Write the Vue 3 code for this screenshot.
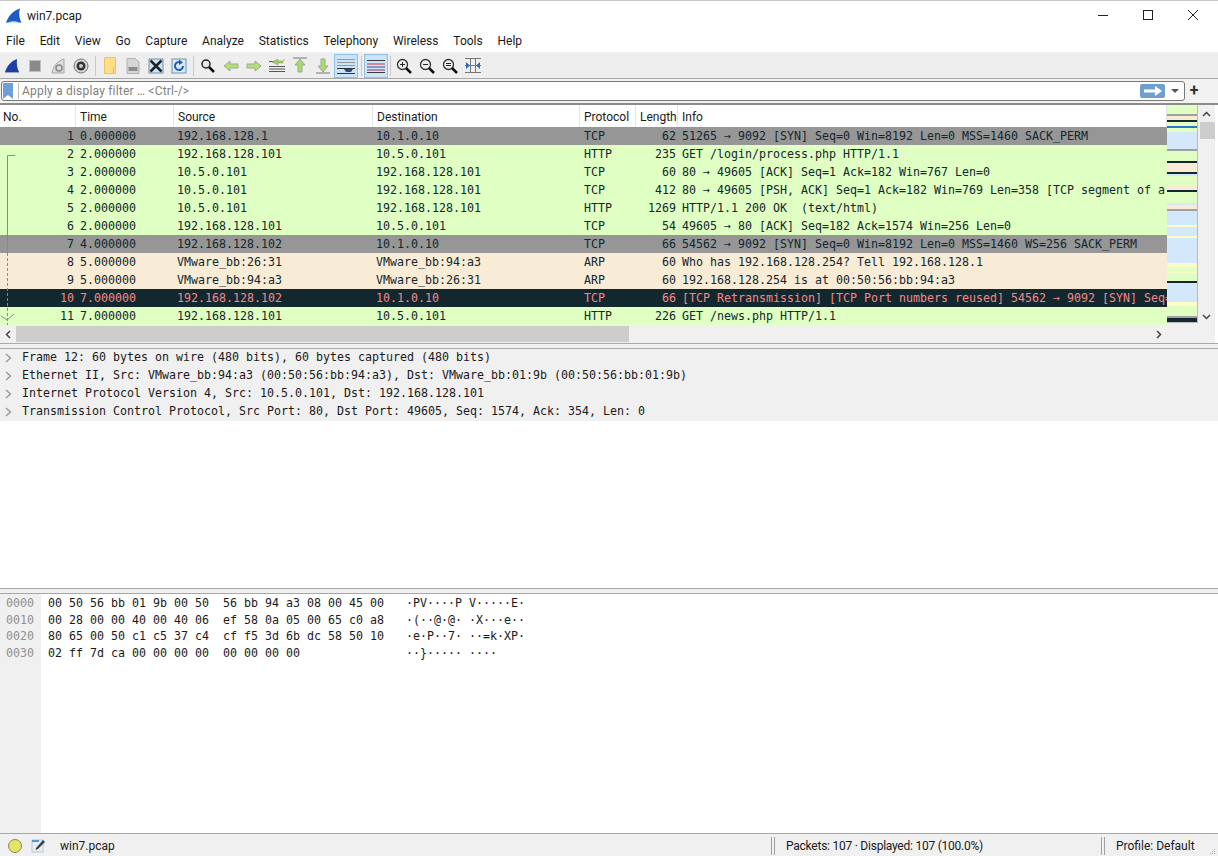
<script setup>
const menus = ['File', 'Edit', 'View', 'Go', 'Capture', 'Analyze', 'Statistics', 'Telephony', 'Wireless', 'Tools', 'Help']

const columns = [
  { key: 'no', label: 'No.' },
  { key: 'time', label: 'Time' },
  { key: 'src', label: 'Source' },
  { key: 'dst', label: 'Destination' },
  { key: 'proto', label: 'Protocol' },
  { key: 'len', label: 'Length' },
  { key: 'info', label: 'Info' },
]

const packets = [
  { no: 1, time: '0.000000', src: '192.168.128.1', dst: '10.1.0.10', proto: 'TCP', len: 62, info: '51265 → 9092 [SYN] Seq=0 Win=8192 Len=0 MSS=1460 SACK_PERM', kind: 'gray' },
  { no: 2, time: '2.000000', src: '192.168.128.101', dst: '10.5.0.101', proto: 'HTTP', len: 235, info: 'GET /login/process.php HTTP/1.1', kind: 'green' },
  { no: 3, time: '2.000000', src: '10.5.0.101', dst: '192.168.128.101', proto: 'TCP', len: 60, info: '80 → 49605 [ACK] Seq=1 Ack=182 Win=767 Len=0', kind: 'green' },
  { no: 4, time: '2.000000', src: '10.5.0.101', dst: '192.168.128.101', proto: 'TCP', len: 412, info: '80 → 49605 [PSH, ACK] Seq=1 Ack=182 Win=769 Len=358 [TCP segment of a', kind: 'green' },
  { no: 5, time: '2.000000', src: '10.5.0.101', dst: '192.168.128.101', proto: 'HTTP', len: 1269, info: 'HTTP/1.1 200 OK  (text/html)', kind: 'green' },
  { no: 6, time: '2.000000', src: '192.168.128.101', dst: '10.5.0.101', proto: 'TCP', len: 54, info: '49605 → 80 [ACK] Seq=182 Ack=1574 Win=256 Len=0', kind: 'green' },
  { no: 7, time: '4.000000', src: '192.168.128.102', dst: '10.1.0.10', proto: 'TCP', len: 66, info: '54562 → 9092 [SYN] Seq=0 Win=8192 Len=0 MSS=1460 WS=256 SACK_PERM', kind: 'gray' },
  { no: 8, time: '5.000000', src: 'VMware_bb:26:31', dst: 'VMware_bb:94:a3', proto: 'ARP', len: 60, info: 'Who has 192.168.128.254? Tell 192.168.128.1', kind: 'tan' },
  { no: 9, time: '5.000000', src: 'VMware_bb:94:a3', dst: 'VMware_bb:26:31', proto: 'ARP', len: 60, info: '192.168.128.254 is at 00:50:56:bb:94:a3', kind: 'tan' },
  { no: 10, time: '7.000000', src: '192.168.128.102', dst: '10.1.0.10', proto: 'TCP', len: 66, info: '[TCP Retransmission] [TCP Port numbers reused] 54562 → 9092 [SYN] Seq=', kind: 'dark' },
  { no: 11, time: '7.000000', src: '192.168.128.101', dst: '10.5.0.101', proto: 'HTTP', len: 226, info: 'GET /news.php HTTP/1.1', kind: 'green' },
]

const details = [
  'Frame 12: 60 bytes on wire (480 bits), 60 bytes captured (480 bits)',
  'Ethernet II, Src: VMware_bb:94:a3 (00:50:56:bb:94:a3), Dst: VMware_bb:01:9b (00:50:56:bb:01:9b)',
  'Internet Protocol Version 4, Src: 10.5.0.101, Dst: 192.168.128.101',
  'Transmission Control Protocol, Src Port: 80, Dst Port: 49605, Seq: 1574, Ack: 354, Len: 0',
]

const hexRows = [
  { off: '0000', hex: '00 50 56 bb 01 9b 00 50  56 bb 94 a3 08 00 45 00', ascii: '·PV····P V·····E·' },
  { off: '0010', hex: '00 28 00 00 40 00 40 06  ef 58 0a 05 00 65 c0 a8', ascii: '·(··@·@· ·X···e··' },
  { off: '0020', hex: '80 65 00 50 c1 c5 37 c4  cf f5 3d 6b dc 58 50 10', ascii: '·e·P··7· ··=k·XP·' },
  { off: '0030', hex: '02 ff 7d ca 00 00 00 00  00 00 00 00', ascii: '··}····· ····' },
]

// minimap stripes: [height, colour]
const g = '#dfffc3'
const b = '#d3e8fb'
const t = '#f8ecd6'
const k = '#12272e'
const a = '#a0a0a0'
const y = '#fcfcc8'
const stripes = [
  [9, g], [2, a], [4, t], [2, k], [4, g], [2, '#2f74c8'], [4, g], [17, b], [2, a], [10, g], [2, k], [9, t], [2, k], [2, b],
  [10, g], [4, t], [2, k], [11, g], [2, b], [4, t], [2, a], [14, b], [2, y], [9, b], [2, y], [25, b], [4, y],
  [4, g], [2, y], [8, g], [2, k], [19, b], [4, y], [10, g], [2, a], [4, k],
]
</script>

<template>
  <div class="win">
    <div class="titlebar">
      <svg class="shark" width="16" height="16" viewBox="0 0 16 16">
        <path d="M0 15C2 8 7 3 14 0.500C12.500 5 13 10 15.500 15C10 13 5 13 0 15Z" fill="#1c5cc4" />
        <path d="M0 15C5 12.500 10 12.500 15.500 15C10 14 5 14 0 15Z" fill="#8ab8ea" />
      </svg>
      <span class="wintitle">win7.pcap</span>
      <div class="winbtns">
        <svg width="12" height="12" viewBox="0 0 12 12"><path d="M1 6.500H11" stroke="#222" /></svg>
        <svg width="12" height="12" viewBox="0 0 12 12"><rect x="1.500" y="1.500" width="9" height="9" fill="none" stroke="#222" /></svg>
        <svg width="12" height="12" viewBox="0 0 12 12"><path d="M1 1L11 11M11 1L1 11" stroke="#222" /></svg>
      </div>
    </div>

    <div class="menubar">
      <span v-for="m in menus" :key="m">{{ m }}</span>
    </div>

    <div class="toolbar">
      <button class="tool">
        <svg width="16" height="15" viewBox="0 0 16 15"><path d="M1 14C3 8 7 3 13 1C12.500 6 13 10 15 14Z" fill="#1f3fa8" /><path d="M1 14.500H15" stroke="#9aa8c0" /></svg>
      </button>
      <button class="tool">
        <svg width="14" height="14" viewBox="0 0 14 14"><rect x="1.500" y="1.500" width="11" height="11" fill="#8a8a8a" stroke="#c0c0c0" /></svg>
      </button>
      <button class="tool">
        <svg width="16" height="16" viewBox="0 0 16 16"><path d="M2 15C3 9 7 3 14 1V15Z" fill="#dcdcdc" stroke="#a8a8a8" /><circle cx="9" cy="10" r="3" fill="none" stroke="#8a8a8a" stroke-width="1.500" /></svg>
      </button>
      <button class="tool">
        <svg width="16" height="16" viewBox="0 0 16 16"><circle cx="8" cy="8" r="7" fill="#d8d8d8" stroke="#777" /><circle cx="8" cy="8" r="4.500" fill="#333" /><circle cx="8" cy="8" r="2" fill="#ccc" /></svg>
      </button>
      <i class="sep"></i>
      <button class="tool">
        <svg width="14" height="17" viewBox="0 0 14 17"><path d="M1.500 .500H12.500V16.500H1.500Z" fill="#ffdf85" stroke="#e8c468" /><path d="M10.500 16V10" stroke="#e0b858" /></svg>
      </button>
      <button class="tool">
        <svg width="14" height="16" viewBox="0 0 14 16"><path d="M1 .500H9L13 4V15.500H1Z" fill="#d6d6d6" stroke="#b0b0b0" /><rect x="2.500" y="9" width="9" height="4" fill="#8c8c8c" /></svg>
      </button>
      <button class="tool">
        <svg width="16" height="16" viewBox="0 0 16 16"><rect x="1" y="1" width="14" height="14" fill="#cfe3f5" stroke="#6f8fb0" /><path d="M2.500 2.500L13.500 13.500M13.500 2.500L2.500 13.500" stroke="#222" stroke-width="2.500" /></svg>
      </button>
      <button class="tool">
        <svg width="16" height="16" viewBox="0 0 16 16"><rect x="1" y="1" width="14" height="14" fill="#dbe9f7" stroke="#6f8fb0" /><path d="M12 8A4 4 0 1 1 9.500 4.300" fill="none" stroke="#1d5fb0" stroke-width="2" /><path d="M8 1.500L12 4.500L8 7Z" fill="#1d5fb0" /></svg>
      </button>
      <i class="sep"></i>
      <button class="tool">
        <svg width="16" height="16" viewBox="0 0 16 16"><circle cx="6" cy="6" r="4" fill="#e8e8e8" stroke="#222" stroke-width="1.500" /><path d="M9 9L14 14" stroke="#111" stroke-width="2.500" /></svg>
      </button>
      <button class="tool">
        <svg width="16" height="12" viewBox="0 0 16 12"><path d="M1 6L7 1V4H15V8H7V11Z" fill="#b4e36c" stroke="#9aa89a" /></svg>
      </button>
      <button class="tool">
        <svg width="16" height="12" viewBox="0 0 16 12"><path d="M15 6L9 1V4H1V8H9V11Z" fill="#b4e36c" stroke="#9aa89a" /></svg>
      </button>
      <button class="tool">
        <svg width="16" height="15" viewBox="0 0 16 15"><path d="M0 3.500H5M0 8.500H16M0 11H16M0 13.500H16" stroke="#555" /><path d="M3 4L9 1V3H14V5H9V7Z" fill="#9bd454" stroke="#888" stroke-width=".5" /><path d="M14 1H16V3H14Z" fill="#ecd24a" /></svg>
      </button>
      <button class="tool">
        <svg width="14" height="17" viewBox="0 0 14 17"><path d="M0 1H14" stroke="#777" /><path d="M7 2L12 8H9V15H5V8H2Z" fill="#a8dc68" stroke="#9aa89a" /></svg>
      </button>
      <button class="tool">
        <svg width="14" height="17" viewBox="0 0 14 17"><path d="M0 16H14" stroke="#777" /><path d="M7 15L12 9H9V2H5V9H2Z" fill="#a8dc68" stroke="#9aa89a" /></svg>
      </button>
      <button class="tool on">
        <svg width="18" height="16" viewBox="0 0 18 16"><path d="M0 1.500H18M0 4.500H18M0 7.500H18" stroke="#9a9a9a" /><path d="M0 10.500H18M0 15.500H18" stroke="#333" /><path d="M7 11H16L14 14H9Z" fill="#1f4f8c" /></svg>
      </button>
      <i class="sep"></i>
      <button class="tool on">
        <svg width="18" height="14" viewBox="0 0 18 14"><path d="M0 1.500H18" stroke="#3a3a3a" /><path d="M0 5H18" stroke="#e03030" /><path d="M0 8H18" stroke="#3050a0" /><path d="M0 11H18" stroke="#a03060" /><path d="M0 13.500H18" stroke="#3a3a3a" /></svg>
      </button>
      <i class="sep tight"></i>
      <button class="tool">
        <svg width="16" height="16" viewBox="0 0 16 16"><circle cx="6.500" cy="6.500" r="5" fill="#eee" stroke="#333" stroke-width="1.300" /><path d="M4 6.500H9M6.500 4V9" stroke="#222" /><path d="M10 10L15 15" stroke="#111" stroke-width="2.500" /></svg>
      </button>
      <button class="tool">
        <svg width="16" height="16" viewBox="0 0 16 16"><circle cx="6.500" cy="6.500" r="5" fill="#eee" stroke="#333" stroke-width="1.300" /><path d="M4 6.500H9" stroke="#222" /><path d="M10 10L15 15" stroke="#111" stroke-width="2.500" /></svg>
      </button>
      <button class="tool">
        <svg width="16" height="16" viewBox="0 0 16 16"><circle cx="6.500" cy="6.500" r="5" fill="#eee" stroke="#333" stroke-width="1.300" /><path d="M4 5.500H9M4 7.500H9" stroke="#222" /><path d="M10 10L15 15" stroke="#111" stroke-width="2.500" /></svg>
      </button>
      <button class="tool">
        <svg width="16" height="15" viewBox="0 0 16 15"><path d="M0 .500H16M0 14.500H16M5.500 0V15M10.500 0V15M0 7.500H16" stroke="#777" /><path d="M1 4L5 7.500L1 11ZM15 4L11 7.500L15 11Z" fill="#2f6fb8" /></svg>
      </button>
    </div>

    <div class="filterwrap">
      <div class="filter">
        <svg class="bookmark" width="10" height="16" viewBox="0 0 10 16"><path d="M0 0H10V16L5 12L0 16Z" fill="#6f9fd8" /></svg>
        <span class="placeholder">Apply a display filter … &lt;Ctrl-/&gt;</span>
        <span class="apply">
          <svg width="20" height="10" viewBox="0 0 20 10"><path d="M1 3.500H12V0L19 5L12 10V6.500H1Z" fill="#fff" /></svg>
        </span>
        <svg width="8" height="4" viewBox="0 0 8 4"><path d="M0 0H8L4 4Z" fill="#555" /></svg>
      </div>
      <span class="plus">+</span>
    </div>

    <div class="packets">
      <div class="packetmain">
        <div class="packetlist">
          <div class="row head">
            <div v-for="c in columns" :key="c.key" class="hcell" :class="c.key">{{ c.label }}</div>
          </div>
          <div v-for="p in packets" :key="p.no" class="row data" :class="p.kind">
            <div v-for="c in columns" :key="c.key" class="cell" :class="c.key">{{ p[c.key] }}</div>
          </div>
          <svg class="related" width="28" height="220" viewBox="0 0 28 220">
            <path d="M15 50.500H7.500V148" fill="none" stroke="#8a8a8a" />
            <path d="M7.500 148V220" fill="none" stroke="#8a8a8a" stroke-dasharray="3 2" />
            <path d="M1 211L7 215L14 209" fill="none" stroke="#8a8a8a" />
          </svg>
        </div>
        <div class="minimap">
          <i v-for="(s, i) in stripes" :key="i" :style="{ height: s[0] + 'px', background: s[1] }"></i>
        </div>
        <div class="vscroll">
          <span class="arrow">
            <svg width="9" height="6" viewBox="0 0 9 6"><path d="M1 5L4.500 1.500L8 5" fill="none" stroke="#444" stroke-width="1.500" /></svg>
          </span>
          <div class="vtrack"><i class="vthumb"></i></div>
          <span class="arrow">
            <svg width="9" height="6" viewBox="0 0 9 6"><path d="M1 1L4.500 4.500L8 1" fill="none" stroke="#444" stroke-width="1.500" /></svg>
          </span>
        </div>
      </div>
      <div class="hscroll">
        <span class="harrow">
          <svg width="6" height="9" viewBox="0 0 6 9"><path d="M5 1L1.500 4.500L5 8" fill="none" stroke="#444" stroke-width="1.500" /></svg>
        </span>
        <div class="htrack"><i class="hthumb"></i></div>
        <span class="harrow">
          <svg width="6" height="9" viewBox="0 0 6 9"><path d="M1 1L4.500 4.500L1 8" fill="none" stroke="#444" stroke-width="1.500" /></svg>
        </span>
      </div>
    </div>

    <div class="splitter"></div>

    <div class="details">
      <div v-for="d in details" :key="d" class="detail">
        <svg width="7" height="10" viewBox="0 0 7 10"><path d="M1 1L5.500 5L1 9" fill="none" stroke="#999" stroke-width="1.400" /></svg>
        <span>{{ d }}</span>
      </div>
    </div>

    <div class="splitter"></div>

    <div class="hexpane">
      <div class="offsets">
        <div v-for="h in hexRows" :key="h.off">{{ h.off }}</div>
      </div>
      <div class="hexes">
        <div v-for="h in hexRows" :key="h.off" class="hexrow">
          <span class="hex">{{ h.hex }}</span>
          <span>{{ h.ascii }}</span>
        </div>
      </div>
    </div>

    <div class="status">
      <span class="led"></span>
      <svg class="note" width="15" height="15" viewBox="0 0 15 15"><rect x="1" y="2" width="11" height="12" fill="#e8eef4" stroke="#b8c4d0" /><path d="M5 10L12 2L14 4L7 11L4.500 12Z" fill="#38424e" /><path d="M1 2H8V4H1Z" fill="#4a9ad8" /></svg>
      <span class="file">win7.pcap</span>
      <i class="grip"></i>
      <span class="counts">Packets: 107 · Displayed: 107 (100.0%)</span>
      <i class="grip"></i>
      <span class="profile">Profile: Default</span>
      <svg class="resize" width="7" height="7" viewBox="0 0 7 7"><path d="M5 1H6V2H5ZM3 3H4V4H3ZM5 3H6V4H5ZM1 5H2V6H1ZM3 5H4V6H3ZM5 5H6V6H5Z" fill="#aaa" /></svg>
    </div>
  </div>
</template>

<style scoped>
.win {
  width: 1218px;
  height: 856px;
  display: flex;
  flex-direction: column;
  overflow: hidden;
  background: #fff;
  font-family: Roboto, "Open Sans", sans-serif;
  font-size: 12px;
  color: #1a1a1a;
}

.titlebar {
  height: 29px;
  flex: none;
  border-top: 1px solid #c8c8c8;
  display: flex;
  align-items: center;
  padding: 0 19px 0 6px;
}
.shark {
  margin-right: 5px;
}
.wintitle {
  flex: 1;
}
.winbtns {
  display: flex;
  gap: 33px;
  margin-top: -2px;
}
.winbtns svg {
  display: block;
}

.menubar {
  height: 22px;
  flex: none;
  display: flex;
  align-items: center;
  padding-left: 6px;
  gap: 14.800px;
  border-bottom: 1px solid #f2f2f2;
}

.toolbar {
  height: 26px;
  flex: none;
  display: flex;
  align-items: center;
  background: #eeeeee;
  border-bottom: 1px solid #a8a8a8;
  box-sizing: border-box;
}
.tool {
  width: 23px;
  height: 24px;
  border: 0;
  padding: 0;
  background: none;
  display: flex;
  align-items: center;
  justify-content: center;
  flex: none;
}
.tool.on {
  width: 24px;
  background: #cce4f7;
  border: 1px solid #8fc0e8;
  box-sizing: border-box;
}
.sep {
  width: 1px;
  height: 20px;
  background: #c8c8c8;
  margin: 0 2.500px;
  flex: none;
}
.sep.tight {
  margin: 0 1.500px 0 2px;
}

.filterwrap {
  height: 26px;
  flex: none;
  display: flex;
  align-items: center;
  background: #f2f2f2;
  padding: 1px 15px 1px 1px;
  box-sizing: border-box;
  border-bottom: 2px solid #8c8c8c;
}
.filter {
  flex: 1;
  height: 20px;
  box-sizing: border-box;
  background: #fff;
  border: 1px solid #777;
  border-radius: 3px;
  display: flex;
  align-items: center;
  padding: 0 5px 0 1px;
}
.bookmark {
  margin-right: 3px;
  padding-right: 5px;
  border-right: 1px solid #bbb;
}
.placeholder {
  flex: 1;
  color: #808080;
  letter-spacing: 0.200px;
}
.apply {
  width: 25px;
  height: 14px;
  border-radius: 2px;
  background: #6f9fd0;
  display: flex;
  align-items: center;
  justify-content: center;
  margin-right: 6px;
}
.plus {
  width: 18px;
  text-align: center;
  font-size: 16px;
  font-weight: 700;
  line-height: 20px;
  color: #333;
}

.packets {
  flex: none;
  height: 238px;
  width: 1215px;
  display: flex;
  flex-direction: column;
}
.packetmain {
  height: 220px;
  display: flex;
  align-items: flex-start;
  background: #f0f0f0;
}
.packetlist {
  position: relative;
  width: 1167px;
  height: 220px;
  overflow: hidden;
  flex: none;
}
.row {
  display: grid;
  grid-template-columns: 76px 98px 199px 207px 56px 42px 489px;
}
.head {
  height: 22px;
  background: #fff;
}
.hcell {
  padding: 5px 0 0 4px;
  box-sizing: border-box;
  border-right: 1px solid #e4e4e4;
  white-space: nowrap;
  overflow: hidden;
}
.hcell.no {
  padding-left: 3px;
}
.data {
  height: 18px;
  font-family: "DejaVu Sans Mono", "Liberation Mono", monospace;
  font-size: 11.630px;
  line-height: 18px;
}
.cell {
  white-space: pre;
  overflow: hidden;
  padding-left: 4px;
}
.cell.src,
.cell.dst {
  padding-left: 3px;
}
.cell.no,
.cell.len {
  text-align: right;
  padding: 0 2px 0 0;
}
.gray {
  background: #969696;
  color: #12272e;
}
.green {
  background: #dfffc3;
  color: #12272e;
}
.tan {
  background: #f8ecd6;
  color: #12272e;
}
.dark {
  background: #12272e;
  color: #f78787;
}
.related {
  position: absolute;
  left: 0;
  top: 0;
}

.minimap {
  width: 31px;
  height: 218px;
  flex: none;
  overflow: hidden;
  display: flex;
  flex-direction: column;
  box-sizing: border-box;
  border-right: 1px solid #bbb;
  border-bottom: 1px solid #bbb;
  background: #fff;
}
.minimap i {
  display: block;
  flex: none;
}

.vscroll {
  width: 17px;
  height: 220px;
  flex: none;
  display: flex;
  flex-direction: column;
  background: #f0f0f0;
}
.arrow {
  height: 17px;
  flex: none;
  display: flex;
  align-items: center;
  justify-content: center;
}
.vtrack {
  flex: 1;
}
.vthumb {
  display: block;
  width: 15px;
  height: 17px;
  margin-left: 2px;
  background: #cdcdcd;
}

.hscroll {
  height: 18px;
  display: flex;
  background: #f0f0f0;
  padding-right: 48px;
}
.harrow {
  width: 16px;
  display: flex;
  align-items: center;
  justify-content: center;
  flex: none;
}
.htrack {
  flex: 1;
}
.hthumb {
  display: block;
  width: 613px;
  height: 16px;
  margin-top: 1px;
  background: #cdcdcd;
}

.splitter {
  height: 6px;
  flex: none;
  background: #f0f0f0;
  border-top: 1px solid #a8a8a8;
  border-bottom: 1px solid #a8a8a8;
  box-sizing: border-box;
}

.details {
  height: 239px;
  flex: none;
  font-family: "DejaVu Sans Mono", "Liberation Mono", monospace;
  font-size: 11.630px;
  line-height: 18px;
}
.detail {
  height: 18px;
  display: flex;
  align-items: center;
  background: #f0f0f0;
  padding-left: 5px;
}
.detail svg {
  margin-right: 10px;
}
.detail span {
  line-height: 16px;
  padding-bottom: 2px;
}

.hexpane {
  height: 239px;
  flex: none;
  display: flex;
  font-family: "DejaVu Sans Mono", "Liberation Mono", monospace;
  font-size: 11.630px;
  line-height: 16.670px;
}
.offsets {
  width: 41px;
  flex: none;
  box-sizing: border-box;
  padding: 1px 0 0 6px;
  background: #f0f0f0;
  color: #909090;
}
.hexes {
  padding: 1px 0 0 7px;
}
.hexrow {
  display: flex;
  white-space: pre;
}
.hex {
  width: 360px;
  margin-right: -2px;
}

.status {
  height: 24px;
  flex: none;
  box-sizing: border-box;
  border-top: 1px solid #a8a8a8;
  background: #f0f0f0;
  display: flex;
  align-items: center;
  padding-left: 8px;
}
.led {
  width: 14px;
  height: 14px;
  box-sizing: border-box;
  border-radius: 50%;
  background: #e4e46a;
  border: 1px solid #8a8a50;
  margin-right: 9px;
}
.note {
  margin-right: 14px;
}
.file {
  width: 711px;
}
.grip {
  width: 4px;
  height: 18px;
  box-sizing: border-box;
  border-left: 1px solid #a0a0a0;
  border-right: 1px solid #a0a0a0;
}
.counts {
  margin-left: 11px;
  width: 315px;
  letter-spacing: -0.240px;
}
.profile {
  margin-left: 11px;
}
.resize {
  margin-left: auto;
  margin-right: 2px;
  align-self: flex-end;
  margin-bottom: 2px;
}
</style>

<style>
html, body {
  margin: 0;
  background: #fff;
}
</style>
